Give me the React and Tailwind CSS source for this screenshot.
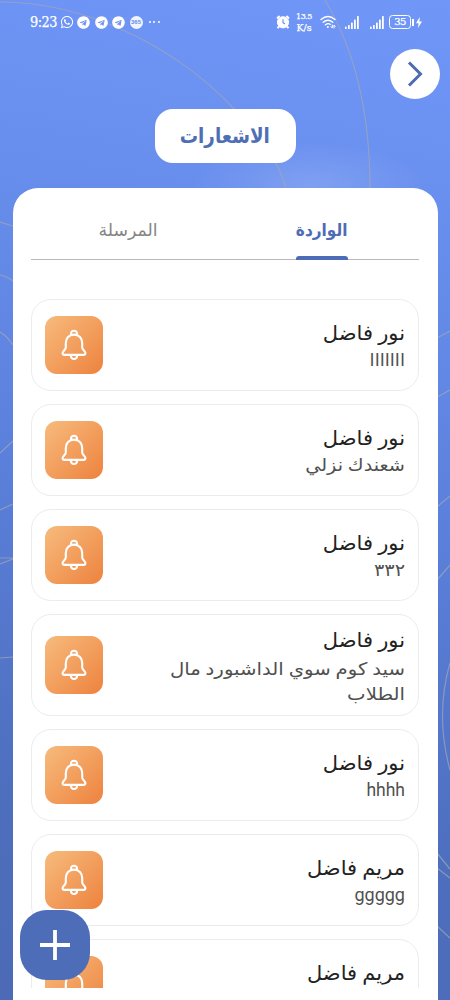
import { useState } from "react";
import { FaWhatsapp, FaTelegram } from "react-icons/fa";

const notifications = [
  { id: 1, name: "نور فاضل", body: "ااااااا", bodyClass: "scale-x-[1.04]" },
  { id: 2, name: "نور فاضل", body: "شعندك نزلي", bodyClass: "scale-x-[1.1]" },
  { id: 3, name: "نور فاضل", body: "٣٣٢", bodyClass: "scale-x-[1.1]" },
  { id: 4, name: "نور فاضل", body: "سيد كوم سوي الداشبورد مال الطلاب", bodyClass: "relative top-[1.5px] scale-x-[1.125]" },
  { id: 5, name: "نور فاضل", body: "hhhh", bodyClass: "" },
  { id: 6, name: "مريم فاضل", body: "ggggg", bodyClass: "scale-x-[1.03]" },
  { id: 7, name: "مريم فاضل", body: "", bodyClass: "" },
];

const tabs = [
  { id: "inbox", label: "الواردة" },
  { id: "sent", label: "المرسلة" },
];

// Thin decorative arcs behind the page
function BackgroundLines() {
  return (
    <svg
      className="absolute inset-0"
      width="450"
      height="1000"
      viewBox="0 0 450 1000"
      fill="none"
      stroke="#a3a7b5"
      strokeOpacity="0.7"
      strokeWidth="1.2"
    >
      <path d="M0 2C45 2 88 14 125 31C165 49 205 77 235 110C260 136 278 160 286 188" />
      <path d="M325 0C355 50 370 115 370 188" />
      <path d="M0 222L13 226M0 275Q6 276 13 281M0 332Q7 336 13 345" />
      <path d="M0 453L13 441M0 510L13 504M0 558H13M0 564L13 559M0 658L13 657" />
      <path d="M437 338L450 331M437 397L450 390M437 507L450 496M437 580L450 565" />
      <path d="M450 663Q435 715 450 770" />
      <path d="M437 853L450 869M437 868L450 878M437 926L450 938" />
    </svg>
  );
}

function AlarmIcon() {
  return (
    <svg width="14" height="14" viewBox="0 0 14 14" fill="none" stroke="white">
      <circle cx="7" cy="7.3" r="5.6" fill="white" />
      <path d="M1 3.4L3.6 1M13 3.4L10.4 1M3 11.5L1.5 13.2M11 11.5L12.5 13.2" strokeWidth="2" />
      <path d="M7 4.2V7.6L9 9" stroke="#6c92f0" strokeWidth="1.2" />
    </svg>
  );
}

function WifiIcon() {
  return (
    <svg width="16" height="14" viewBox="0 0 16 14" fill="none" stroke="white" strokeLinecap="round">
      <path d="M1 4.6Q8 -1.6 15 4.6M3.2 7.3Q8 3.2 12.8 7.3M5.4 9.8Q8 7.8 10.2 9.3" strokeWidth="1.4" />
      <circle cx="7.8" cy="12" r="1" fill="white" stroke="none" />
      <path d="M11 11.6L12.3 13L12.3 10M14 13L14 10L15.2 11.4" strokeWidth="1" />
    </svg>
  );
}

function SignalIcon() {
  return (
    <svg width="14" height="13" viewBox="0 0 14 13" fill="white">
      <rect x="0" y="10.6" width="1.6" height="2.4" rx="0.6" />
      <rect x="3" y="9" width="1.7" height="4" rx="0.6" />
      <rect x="6" y="6.4" width="1.8" height="6.6" rx="0.6" />
      <rect x="9" y="3.4" width="1.8" height="9.6" rx="0.6" />
      <rect x="12" y="0" width="1.8" height="13" rx="0.6" />
    </svg>
  );
}

function StatusBar() {
  return (
    <div className="flex h-11 items-center justify-between pl-[29.5px] pr-[28.5px] font-['DejaVu_Serif',serif] text-white [-webkit-text-stroke:0.25px_white]">
      <div className="flex items-center">
        <span className="w-[30px] origin-left scale-x-[0.92] text-[14px] leading-none tracking-[-0.5px]">
          9:23
        </span>
        <FaWhatsapp className="size-[14px]" />
        <FaTelegram className="ml-[3.5px] size-[13px]" />
        <FaTelegram className="ml-[4.5px] size-[13px]" />
        <FaTelegram className="ml-[4.5px] size-[13px]" />
        <span className="ml-[4.5px] flex size-[13px] items-center justify-center rounded-full bg-white/90 font-['Liberation_Sans'] text-[6px] font-bold text-[#6a8de6] [-webkit-text-stroke:0]">
          365
        </span>
        <span className="ml-[6px] flex gap-[2.5px]">
          <i className="size-[2px] rounded-full bg-white" />
          <i className="size-[2px] rounded-full bg-white" />
          <i className="size-[2px] rounded-full bg-white" />
        </span>
      </div>
      <div className="flex items-center">
        <AlarmIcon />
        <span className="ml-[4px] mr-[6px] flex w-[20px] flex-col items-center text-[8px] leading-[11px] tracking-[-0.5px] whitespace-nowrap">
          <span>13.5</span>
          <span className="text-[9.5px] tracking-normal">K/s</span>
        </span>
        <WifiIcon />
        <span className="ml-[9px]">
          <SignalIcon />
        </span>
        <span className="ml-[11px]">
          <SignalIcon />
        </span>
        <span className="ml-[5px] flex h-[13.5px] w-[22px] items-center justify-center rounded-[3.5px] border-[1.2px] border-white text-[10px] leading-none tracking-[-0.5px]">
          35
        </span>
        <i className="ml-[1px] h-[7px] w-[1.5px] bg-white" />
        <svg className="ml-[2px]" width="6" height="11" viewBox="0 0 6 11" fill="white">
          <path d="M3.8 0L0 6.2H2.6L2 11L6 4.6H3.4Z" />
        </svg>
      </div>
    </div>
  );
}

function BellIcon() {
  return (
    <svg
      width="26"
      height="32"
      viewBox="0 0 26 32"
      fill="none"
      stroke="white"
      strokeWidth="2.1"
      strokeLinecap="round"
      strokeLinejoin="round"
    >
      <path d="M10.2 5.6C8.8 0.4 17.2 0.4 15.8 5.6" />
      <path d="M13 5.6C8 5.6 4.8 9.2 4.8 14V18.5C4.8 21 1.6 21.8 1.6 24C1.6 25.2 2.4 25.9 3.6 25.9H22.4C23.6 25.9 24.4 25.2 24.4 24C24.4 21.8 21.2 21 21.2 18.5V14C21.2 9.2 18 5.6 13 5.6Z" />
      <path d="M9.8 26.6C10.4 31.2 15.6 31.2 16.2 26.6" />
    </svg>
  );
}

function NotificationCard({ item }) {
  return (
    <div className="flex h-[92px] shrink-0 items-center justify-between rounded-[20px] border border-[#ececec] px-[13px] py-[10px] has-[.tall]:h-[102px]">
      <div className={item.body.length > 20 ? "tall w-[224px]" : "w-[224px]"}>
        <p className="origin-right scale-x-[1.05] text-[20px] leading-[30px] text-[#222]">{item.name}</p>
        <p className={`min-h-[25px] origin-right text-[17.5px] leading-[25px] text-[#505050] ${item.bodyClass}`}>
          {item.body}
        </p>
      </div>
      <div className="flex size-[58px] items-center justify-center rounded-[12px] bg-linear-to-br from-[#f6bb7c] to-[#ed823d]">
        <BellIcon />
      </div>
    </div>
  );
}

export default function App() {
  const [tab, setTab] = useState("inbox");

  return (
    <div className="relative h-[1000px] w-[450px] overflow-hidden bg-linear-[190deg,#7096f8_0%,#688eed_22%,#5b80db_50%,#4e6fbe_80%,#4c6ab6_100%] font-['Roboto','DejaVu_Sans',sans-serif]">
      <div className="absolute left-[190px] top-[140px] h-[90px] w-[240px] bg-radial from-white/15 to-transparent to-70%" />
      <BackgroundLines />

      <div className="relative flex h-full flex-col">
        <StatusBar />

        <header className="flex h-[143.5px] shrink-0 flex-col items-center">
          <button className="mr-[10px] mt-[4.5px] flex size-[50px] shrink-0 items-center justify-center self-end rounded-full bg-white">
            <svg width="16" height="26" viewBox="0 0 16 26" fill="none" stroke="#4c6bb0" strokeWidth="3">
              <path d="M2 1.5L13.5 13L2 24.5" />
            </svg>
          </button>
          <h1
            dir="rtl"
            className="mt-[10px] flex h-[54px] w-[141px] items-center justify-center rounded-[18px] bg-white text-[21px] font-bold text-[#4f6fb5]"
          >
            <span className="mt-[3px] scale-x-[0.87]">الاشعارات</span>
          </h1>
        </header>

        <main dir="rtl" className="mx-[12.5px] flex min-h-0 flex-1 flex-col overflow-hidden rounded-t-[25px] bg-white px-[18.5px] pb-[12px]">
          {/* Tabs */}
          <div className="grid h-[72.5px] shrink-0 grid-cols-2 border-b border-[#b9b9b9]">
            {tabs.map((t) => (
              <button
                key={t.id}
                onClick={() => setTab(t.id)}
                className={`flex flex-col items-center justify-end text-[17px] ${
                  tab === t.id ? "font-bold text-[#4c6db5]" : "text-[#858585]"
                }`}
              >
                <span
                  className={`mb-[13px] leading-[26px] ${tab === t.id ? "scale-x-[0.9]" : "scale-x-[1.02]"}`}
                >
                  {t.label}
                </span>
                <i
                  className={`-mb-px h-[4px] w-[52px] rounded-t-[3px] ${tab === t.id ? "bg-[#4c6db5]" : ""}`}
                />
              </button>
            ))}
          </div>

          {/* Notifications */}
          <div className="mt-[39px] flex min-h-0 flex-1 flex-col gap-[13px] overflow-hidden">
            {notifications.map((n) => (
              <NotificationCard key={n.id} item={n} />
            ))}
          </div>
        </main>

        <button className="absolute bottom-[20px] left-[20px] flex size-[70px] items-center justify-center rounded-[27px] bg-[#4d6db8]">
          <svg width="30" height="30" viewBox="0 0 30 30" stroke="white" strokeWidth="3.8">
            <path d="M15 0V30M0 15H30" />
          </svg>
        </button>
      </div>
    </div>
  );
}
